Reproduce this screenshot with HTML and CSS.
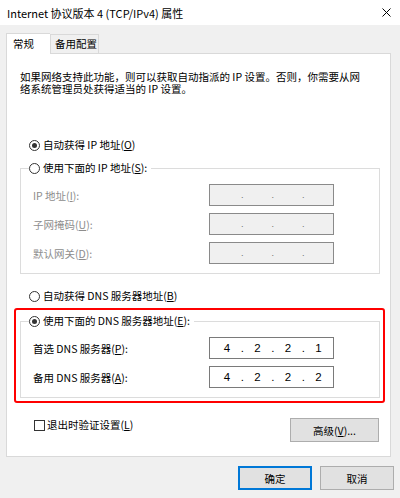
FILE: index.html
```html
<!DOCTYPE html>
<html lang="zh-CN">
<head>
    <meta charset="UTF-8">
    <title>Internet 协议版本 4 (TCP/IPv4) 属性</title>
    <link rel="stylesheet" href="styles.css">
</head>
<body>
    <div class="titlebar">
        <span>Internet 协议版本 4 (TCP/IPv4) 属性</span>
        <svg class="close" width="9" height="9" viewBox="0 0 9 9">
            <path d="M0.5 0.5 L8.5 8.5 M8.5 0.5 L0.5 8.5" stroke="#000" stroke-width="1" fill="none"/>
        </svg>
    </div>

    <div class="tabs">
        <div class="tab active">常规</div>
        <div class="tab">备用配置</div>
    </div>

    <div class="panel">
        <div class="intro">
            <div>如果网络支持此功能，则可以获取自动指派的 IP 设置。否则，你需要从网</div>
            <div>络系统管理员处获得适当的 IP 设置。</div>
        </div>

        <div class="opt ip-auto"><span class="radio checked"></span>自动获得 IP 地址(<u>O</u>)</div>

        <fieldset class="group">
            <legend><span class="opt"><span class="radio"></span>使用下面的 IP 地址(<u>S</u>):</span></legend>
            <div class="row disabled">
                <span class="label">IP 地址(<u>I</u>):</span>
                <div class="ip"><span class="seg"></span><span class="dot">.</span><span class="seg"></span><span class="dot">.</span><span class="seg"></span><span class="dot">.</span><span class="seg"></span></div>
            </div>
            <div class="row disabled">
                <span class="label">子网掩码(<u>U</u>):</span>
                <div class="ip"><span class="seg"></span><span class="dot">.</span><span class="seg"></span><span class="dot">.</span><span class="seg"></span><span class="dot">.</span><span class="seg"></span></div>
            </div>
            <div class="row disabled">
                <span class="label">默认网关(<u>D</u>):</span>
                <div class="ip"><span class="seg"></span><span class="dot">.</span><span class="seg"></span><span class="dot">.</span><span class="seg"></span><span class="dot">.</span><span class="seg"></span></div>
            </div>
        </fieldset>

        <div class="opt dns-auto"><span class="radio"></span>自动获得 DNS 服务器地址(<u>B</u>)</div>

        <!-- 红框标注 -->
        <div class="mark">
            <fieldset class="group">
                <legend><span class="opt"><span class="radio checked"></span>使用下面的 DNS 服务器地址(<u>E</u>):</span></legend>
                <div class="row">
                    <span class="label">首选 DNS 服务器(<u>P</u>):</span>
                    <div class="ip"><span class="seg">4</span><span class="dot">.</span><span class="seg">2</span><span class="dot">.</span><span class="seg">2</span><span class="dot">.</span><span class="seg">1</span></div>
                </div>
                <div class="row">
                    <span class="label">备用 DNS 服务器(<u>A</u>):</span>
                    <div class="ip"><span class="seg">4</span><span class="dot">.</span><span class="seg">2</span><span class="dot">.</span><span class="seg">2</span><span class="dot">.</span><span class="seg">2</span></div>
                </div>
            </fieldset>
        </div>

        <div class="bottom-row">
            <div class="check"><span class="box"></span>退出时验证设置(<u>L</u>)</div>
            <button class="btn adv">高级(<u>V</u>)...</button>
        </div>
    </div>

    <div class="actions">
        <button class="btn default">确定</button>
        <button class="btn">取消</button>
    </div>
</body>
</html>
```

FILE: styles.css
```css
* {
    box-sizing: border-box;
}
body {
    margin: 0;
    width: 400px;
    height: 498px;
    overflow: hidden;
    background-color: #f0f0f0;
    color: #000;
    font-family: "Noto Sans CJK SC", sans-serif;
    font-size: 10.5px;
}
.titlebar {
    height: 25px;
    background-color: #fff;
    display: flex;
    align-items: center;
    justify-content: space-between;
    padding: 0 9px 0 7px;
    font-size: 11px;
}
.tabs {
    display: flex;
    align-items: flex-end;
    height: 20px;
    margin: 8px 0 0 6px;
}
.tab {
    height: 19px;
    width: 49px;
    padding-left: 4px;
    line-height: 18px;
    border: 1px solid #d9d9d9;
    border-bottom: none;
    background-color: #f0f0f0;
}
.tab.active {
    height: 21px;
    width: 44px;
    padding-left: 6px;
    line-height: 19px;
    margin-bottom: -1px;
    border-right: none;
    background-color: #fff;
    position: relative;
    z-index: 1;
}
.panel {
    margin-left: 6px;
    width: 385px;
    height: 404px;
    background-color: #fff;
    border: 1px solid #d9d9d9;
    padding: 0 10px 0 13px;
}
.intro {
    margin-top: 17px;
    line-height: 12px;
}
.opt {
    display: flex;
    align-items: center;
    line-height: 14px;
}
.ip-auto {
    margin: 43px 0 0 9px;
}
.dns-auto {
    margin: 15px 0 0 9px;
}
.radio {
    width: 11px;
    height: 11px;
    border: 1px solid #333;
    border-radius: 50%;
    margin-right: 3px;
    display: flex;
    align-items: center;
    justify-content: center;
    background-color: #fff;
}
.radio.checked::after {
    content: "";
    width: 5px;
    height: 5px;
    border-radius: 50%;
    background-color: #333;
}
.group {
    margin: 9px 0 0;
    padding: 9px 9px 9px 12px;
    border: 1px solid #dcdcdc;
    min-width: 0;
}
.group legend {
    margin-left: -4px;
    padding: 0 4px 0 0;
    line-height: 14px;
}
.row {
    display: flex;
    align-items: center;
    height: 22px;
}
.row + .row {
    margin-top: 7px;
}
.row .label {
    width: 176px;
}
.row.disabled .label {
    color: #8d8d8d;
}
.ip {
    width: 125px;
    height: 22px;
    border: 1px solid #7a7a7a;
    background-color: #fff;
    display: flex;
    align-items: center;
    padding-left: 4.5px;
    font-family: "Liberation Sans", Arial, sans-serif;
    font-size: 11.5px;
}
.row.disabled .ip {
    background-color: #f0f0f0;
    border-color: #8a8a8a;
    color: #6d6d6d;
    font-size: 9px;
}
.seg {
    width: 25px;
    text-align: center;
}
.dot {
    width: 5.5px;
    text-align: center;
}
.mark {
    margin: 5px -5px 0 -6px;
    padding: 4px 3px 3px 4px;
    border: 2px solid #f00;
    border-radius: 3px;
}
.mark .group {
    margin-top: 0;
}
.bottom-row {
    display: flex;
    justify-content: space-between;
    align-items: flex-start;
    margin-top: 15px;
}
.check {
    display: flex;
    align-items: center;
    line-height: 14px;
    margin-left: 14px;
}
.check .box {
    width: 11px;
    height: 11px;
    border: 1px solid #333;
    margin-right: 2px;
}
.btn {
    width: 74px;
    height: 24px;
    padding: 0;
    background-color: #e1e1e1;
    border: 1px solid #adadad;
    color: #000;
    font-family: inherit;
    font-size: 10.5px;
}
.btn.adv {
    width: 89px;
    margin-right: 1px;
}
.btn.default {
    border: 2px solid #0078d7;
}
.actions {
    display: flex;
    justify-content: flex-end;
    gap: 8px;
    margin-top: 9px;
    padding-right: 6px;
}
```
